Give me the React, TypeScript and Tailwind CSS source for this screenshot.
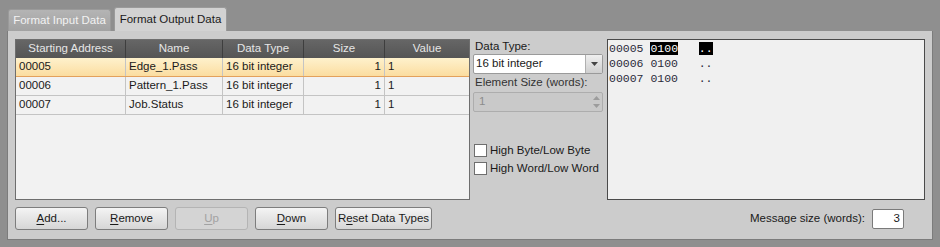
const rows = [
  { addr: "00005", name: "Edge_1.Pass", type: "16 bit integer", size: "1", value: "1" },
  { addr: "00006", name: "Pattern_1.Pass", type: "16 bit integer", size: "1", value: "1" },
  { addr: "00007", name: "Job.Status", type: "16 bit integer", size: "1", value: "1" },
];

function Btn({ u, rest, pre = "", w = "w-[73px]", disabled = false }: { u: string; rest: string; pre?: string; w?: string; disabled?: boolean }) {
  return (
    <button
      className={
        disabled
          ? `${w} h-[23px] rounded-[3px] border border-[#b4b4b4] bg-[#d4d4d4] text-[#a2a2a2]`
          : `${w} h-[23px] rounded-[3px] border border-[#7d7d7d] bg-gradient-to-b from-[#f4f4f4] to-[#d6d6d6] text-[#1a1a1a]`
      }
    >
      {pre}
      <span className="underline underline-offset-2">{u}</span>
      {rest}
    </button>
  );
}

export default function App() {
  return (
    <div className="w-[940px] h-[247px] bg-[#8f8f8f] overflow-hidden text-[11.5px] text-[#1a1a1a]" style={{ fontFamily: '"Liberation Sans", Arial, sans-serif' }}>
      {/* Tabs */}
      <div className="flex items-end h-[31px] pl-[8px] gap-[3px]">
        <div className="h-[22px] w-[103px] rounded-t-[3px] border border-b-0 border-[#9a9a9a] bg-gradient-to-b from-[#b4b4b4] to-[#a2a2a2] text-[#f2f2f2] flex items-center justify-center">
          Format Input Data
        </div>
        <div className="h-[24px] w-[113px] rounded-t-[3px] border border-b-0 border-[#9a9a9a] bg-[#d2d2d2] flex items-center justify-center">
          Format Output Data
        </div>
      </div>

      {/* Panel */}
      <div className="ml-[7px] w-[926px] h-[209px] bg-[#cccccc] border-l border-r border-b border-[#7c7c7c] px-[7px] pt-[8px]">
        <div className="flex h-[161px]">
          {/* Table */}
          <div className="w-[455px] h-full border border-[#6e6e6e] bg-[#f2f2f2] flex flex-col">
            <div className="flex h-[18px] bg-gradient-to-b from-[#666666] to-[#555555] text-[#e6e6e6]">
              <div className="w-[110px] border-r border-[#3e3e3e] flex items-center justify-center">Starting Address</div>
              <div className="w-[97px] border-r border-[#3e3e3e] flex items-center justify-center">Name</div>
              <div className="w-[81px] border-r border-[#3e3e3e] flex items-center justify-center">Data Type</div>
              <div className="w-[81px] border-r border-[#3e3e3e] flex items-center justify-center">Size</div>
              <div className="flex-1 flex items-center justify-center">Value</div>
            </div>
            {rows.map((r, i) => (
              <div
                key={r.addr}
                className={
                  i === 0
                    ? "flex h-[19px] bg-gradient-to-b from-[#fef1cc] to-[#fbdda0] border-b border-[#e3a15c]"
                    : "flex h-[19px] border-b border-[#c4c4c4]"
                }
              >
                <div className="w-[110px] border-r border-[#c4c4c4] pl-[3px] flex items-center">{r.addr}</div>
                <div className="w-[97px] border-r border-[#c4c4c4] pl-[3px] flex items-center">{r.name}</div>
                <div className="w-[81px] border-r border-[#c4c4c4] pl-[3px] flex items-center">{r.type}</div>
                <div className="w-[81px] border-r border-[#c4c4c4] pr-[3px] flex items-center justify-end">{r.size}</div>
                <div className="flex-1 pl-[3px] flex items-center">{r.value}</div>
              </div>
            ))}
          </div>

          {/* Data type options */}
          <div className="w-[130px] ml-[3px] flex flex-col">
            <div className="h-[15px] pl-[2px] flex items-center">Data Type:</div>
            <div className="h-[20px] rounded-[2px] border border-[#9a9a9a] bg-white flex">
              <div className="flex-1 pl-[2px] flex items-center">16 bit integer</div>
              <div className="w-[17px] border-l border-[#b0b0b0] bg-gradient-to-b from-[#efefef] to-[#cfcfcf] flex items-center justify-center">
                <svg width="7" height="4" viewBox="0 0 7 4"><path d="M0 0h7L3.5 4z" fill="#444" /></svg>
              </div>
            </div>
            <div className="h-[18px] pl-[2px] flex items-center text-[#333]">Element Size (words):</div>
            <div className="h-[20px] rounded-[2px] border border-[#adadad] bg-[#c9c9c9] flex text-[#8c8c8c]">
              <div className="flex-1 pl-[5px] flex items-center">1</div>
              <div className="w-[12px] flex flex-col items-center justify-center gap-[4px]">
                <svg width="7" height="4" viewBox="0 0 7 4"><path d="M0 4h7L3.5 0z" fill="#9c9c9c" /></svg>
                <svg width="7" height="4" viewBox="0 0 7 4"><path d="M0 0h7L3.5 4z" fill="#9c9c9c" /></svg>
              </div>
            </div>
            <div className="mt-[32px] flex flex-col gap-[5px] pl-[1px]">
              <label className="flex items-center gap-[3px] h-[13px]">
                <span className="w-[13px] h-[13px] border border-[#6e6e6e] bg-white" />
                High Byte/Low Byte
              </label>
              <label className="flex items-center gap-[3px] h-[13px]">
                <span className="w-[13px] h-[13px] border border-[#6e6e6e] bg-white" />
                High Word/Low Word
              </label>
            </div>
          </div>

          {/* Hex view */}
          <div className="ml-[4px] flex-1 h-full border border-[#4a4a4a] bg-[#f0f0f0] pl-[1px] pt-[1px] text-[11.5px] leading-[15px] whitespace-pre text-[#2a2a3a]" style={{ fontFamily: '"Liberation Mono", "Courier New", monospace' }}>
            <div>00005 <span className="bg-black text-white">0100</span>   <span className="bg-black text-white">..</span></div>
            <div>00006 0100   ..</div>
            <div>00007 0100   ..</div>
          </div>
        </div>

        {/* Bottom buttons */}
        <div className="flex items-center mt-[7px] h-[23px]">
          <div className="flex gap-[7px]">
            <Btn u="A" rest="dd..." />
            <Btn u="R" rest="emove" />
            <Btn u="U" rest="p" disabled />
            <Btn u="D" rest="own" />
            <Btn pre="R" u="e" rest="set Data Types" w="w-[97px]" />
          </div>
          <div className="ml-auto mr-[21px] flex items-center gap-[7px]">
            <span>Message size (words):</span>
            <div className="w-[32px] h-[20px] rounded-[2px] border border-[#7a7a7a] bg-white flex items-center justify-end pr-[3px]">3</div>
          </div>
        </div>
      </div>
    </div>
  );
}
